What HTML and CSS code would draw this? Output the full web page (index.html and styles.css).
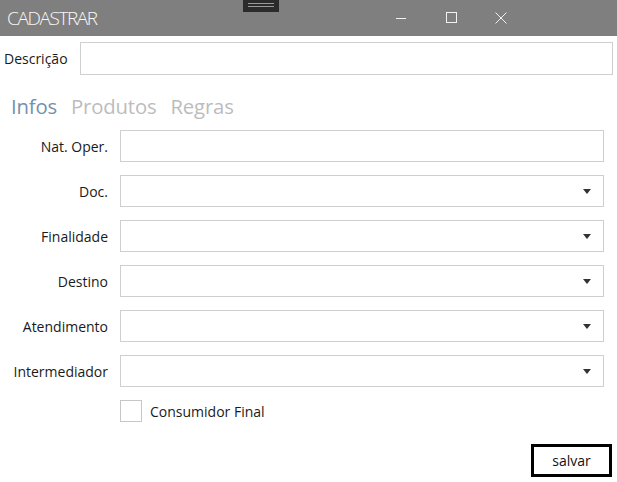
FILE: index.html
```html
<!DOCTYPE html>
<html lang="pt">
<head>
<meta charset="utf-8">
<title>CADASTRAR</title>
<link rel="stylesheet" href="styles.css">
</head>
<body>
<div class="window">
  <header class="titlebar">
    <span class="title">CADASTRAR</span>
    <div class="grip"><span></span><span></span></div>
    <div class="controls">
      <span class="ctl"><svg width="12" height="12" viewBox="0 0 12 12"><path d="M1 6.5H11" stroke="#f2f2f2" stroke-width="1"/></svg></span>
      <span class="ctl"><svg width="12" height="12" viewBox="0 0 12 12"><rect x="1.5" y="0.5" width="10" height="10" fill="none" stroke="#f2f2f2" stroke-width="1"/></svg></span>
      <span class="ctl"><svg width="12" height="12" viewBox="0 0 12 12"><path d="M0.5 0.5L11.5 11.5M11.5 0.5L0.5 11.5" stroke="#f2f2f2" stroke-width="1"/></svg></span>
    </div>
  </header>

  <div class="desc-row">
    <label class="desc-label">Descrição</label>
    <div class="input desc-input"></div>
  </div>

  <nav class="tabs">
    <span class="tab active">Infos</span>
    <span class="tab">Produtos</span>
    <span class="tab">Regras</span>
  </nav>

  <div class="form">
    <label class="lbl">Nat. Oper.</label>
    <div class="input"></div>

    <label class="lbl">Doc.</label>
    <div class="input select"><span class="arrow"></span></div>

    <label class="lbl">Finalidade</label>
    <div class="input select"><span class="arrow"></span></div>

    <label class="lbl">Destino</label>
    <div class="input select"><span class="arrow"></span></div>

    <label class="lbl">Atendimento</label>
    <div class="input select"><span class="arrow"></span></div>

    <label class="lbl">Intermediador</label>
    <div class="input select"><span class="arrow"></span></div>

    <span></span>
    <div class="check-row">
      <span class="checkbox"></span>
      <span class="check-label">Consumidor Final</span>
    </div>
  </div>

  <div class="actions">
    <button class="btn">salvar</button>
  </div>
</div>
</body>
</html>
```

FILE: styles.css
```css
* { box-sizing: border-box; }
html, body {
  margin: 0;
  padding: 0;
  background: #ffffff;
}
body {
  font-family: "Open Sans", "Noto Sans", sans-serif;
  font-size: 14px;
  color: #1a1a1a;
  width: 617px;
  height: 482px;
  overflow: hidden;
}
.titlebar {
  position: relative;
  height: 36px;
  background: #7f7f7f;
  display: flex;
  align-items: center;
  padding-left: 7px;
}
.title {
  font-size: 19px;
  font-weight: 300;
  color: #f8f8f8;
  letter-spacing: -1.4px;
}
.grip {
  position: absolute;
  left: 243px;
  top: 0;
  width: 36px;
  height: 12px;
  background: #2b2b2b;
  display: flex;
  flex-direction: column;
  align-items: center;
  justify-content: center;
  gap: 2px;
  padding-bottom: 2px;
}
.grip span {
  display: block;
  width: 26px;
  height: 1px;
  background: #9a9a9a;
}
.controls {
  margin-left: auto;
  display: flex;
  height: 36px;
  padding-right: 91px;
}
.ctl {
  width: 50px;
  display: flex;
  align-items: center;
  justify-content: center;
}
.desc-row {
  display: flex;
  align-items: center;
  margin-top: 6px;
  padding-left: 4px;
}
.desc-label {
  width: 76px;
}
.input {
  height: 32px;
  border: 1px solid #cfcfcf;
  background: #fff;
  position: relative;
}
.desc-input {
  width: 533px;
  height: 33px;
}
.tabs {
  display: flex;
  gap: 14px;
  padding-left: 11px;
  margin-top: 15px;
  height: 32px;
  align-items: center;
}
.tab {
  font-size: 20.3px;
  color: #bcbcbc;
  letter-spacing: -0.15px;
}
.tab.active {
  color: #7390ad;
}
.form {
  display: grid;
  grid-template-columns: 108px 484px;
  column-gap: 12px;
  row-gap: 13px;
  margin-top: 8px;
  align-items: center;
}
.lbl {
  text-align: right;
  white-space: nowrap;
}
.select .arrow {
  position: absolute;
  right: 12px;
  top: 13px;
  width: 0;
  height: 0;
  border-left: 4px solid transparent;
  border-right: 4px solid transparent;
  border-top: 5px solid #333;
}
.check-row {
  display: flex;
  align-items: center;
  gap: 8px;
  height: 22px;
}
.checkbox {
  width: 22px;
  height: 22px;
  border: 1px solid #c6c6c6;
  background: #fff;
}
.actions {
  display: flex;
  justify-content: flex-end;
  padding-right: 5px;
  margin-top: 22px;
}
.btn {
  width: 81px;
  height: 33px;
  border: 3px solid #000;
  background: #fff;
  font-family: "Open Sans", "Noto Sans", sans-serif;
  font-size: 14px;
  color: #111;
  padding: 0;
}
```
